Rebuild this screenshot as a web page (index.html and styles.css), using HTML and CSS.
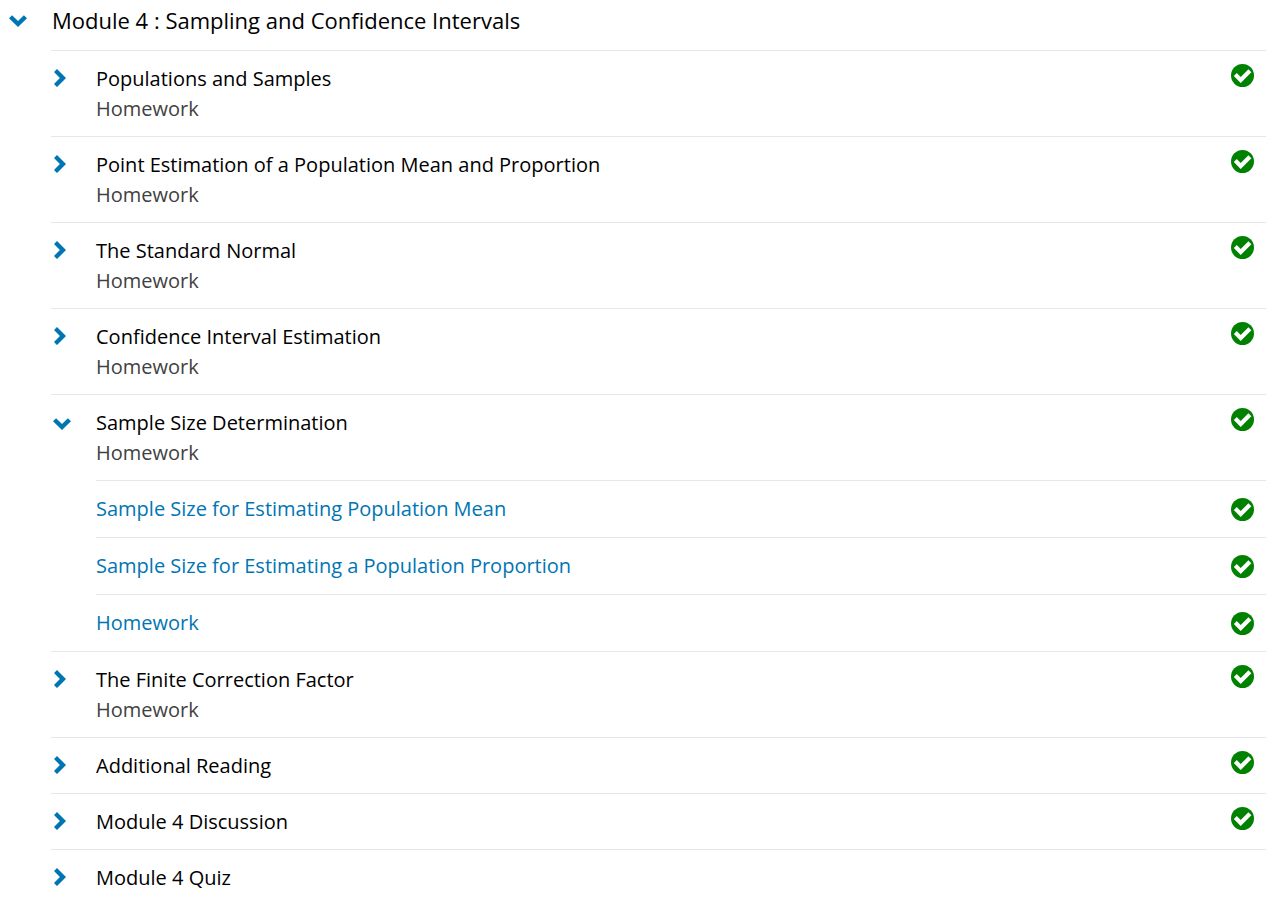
FILE: index.html
```html
<!DOCTYPE html>
<html lang="en">
<head>
<meta charset="utf-8">
<title>Module 4</title>
<link rel="stylesheet" href="styles.css">
</head>
<body>
<svg class="sprite" aria-hidden="true">
<symbol id="chevron" viewBox="0 0 12 18"><path d="M0 3.1 3 0 12 9 3 18 0 14.9 5.9 9z"/></symbol>
<symbol id="chevron-down" viewBox="0 0 18 12"><path d="M0 3.2 3.1 0.2 9 6 14.9 0.2 18 3.2 9 12z"/></symbol>
<symbol id="check" viewBox="0 0 23 23"><circle cx="11.5" cy="11.5" r="11.5"/><path d="M4.3 10.6 9.7 16 18.9 6.8" fill="none" stroke="#fff" stroke-width="4.2"/></symbol>
</svg>
<main class="outline">
<button class="module"><svg class="down"><use href="#chevron-down"/></svg><span class="module-title">Module 4 : Sampling and Confidence Intervals</span></button>
<ul class="sections">
<li><button class="row"><svg class="right"><use href="#chevron"/></svg><span class="text">Populations and Samples<span class="kind">Homework</span></span><svg class="check"><use href="#check"/></svg></button></li>
<li><button class="row"><svg class="right"><use href="#chevron"/></svg><span class="text">Point Estimation of a Population Mean and Proportion<span class="kind">Homework</span></span><svg class="check"><use href="#check"/></svg></button></li>
<li><button class="row"><svg class="right"><use href="#chevron"/></svg><span class="text">The Standard Normal<span class="kind">Homework</span></span><svg class="check"><use href="#check"/></svg></button></li>
<li><button class="row"><svg class="right"><use href="#chevron"/></svg><span class="text">Confidence Interval Estimation<span class="kind">Homework</span></span><svg class="check"><use href="#check"/></svg></button></li>
<li><button class="row"><svg class="down"><use href="#chevron-down"/></svg><span class="text">Sample Size Determination<span class="kind">Homework</span></span><svg class="check"><use href="#check"/></svg></button>
<ul class="units">
<li><a class="unit" href="#">Sample Size for Estimating Population Mean<svg class="check"><use href="#check"/></svg></a></li>
<li><a class="unit" href="#">Sample Size for Estimating a Population Proportion<svg class="check"><use href="#check"/></svg></a></li>
<li><a class="unit" href="#">Homework<svg class="check"><use href="#check"/></svg></a></li>
</ul></li>
<li><button class="row"><svg class="right"><use href="#chevron"/></svg><span class="text">The Finite Correction Factor<span class="kind">Homework</span></span><svg class="check"><use href="#check"/></svg></button></li>
<li><button class="row"><svg class="right"><use href="#chevron"/></svg><span class="text">Additional Reading</span><svg class="check"><use href="#check"/></svg></button></li>
<li><button class="row"><svg class="right"><use href="#chevron"/></svg><span class="text">Module 4 Discussion</span><svg class="check"><use href="#check"/></svg></button></li>
<li><button class="row"><svg class="right"><use href="#chevron"/></svg><span class="text">Module 4 Quiz</span></button></li>
</ul>
</main>
</body>
</html>
```
FILE: styles.css
```css
* { box-sizing: border-box; }
body { margin: 0; background: #fff; color: #000; font: 20px/30px "Open Sans", sans-serif; }
ul { margin: 0; padding: 0; list-style: none; }
button { width: 100%; border: 0; background: none; color: inherit; font: inherit; text-align: left; cursor: pointer; }
.sprite { position: absolute; width: 0; height: 0; }
.outline { padding-right: 16px; }
.module { display: flex; padding: 5px 0 15px 9px; }
.module-title { font-size: 22px; }
.sections { margin-left: 51px; }
.sections li { border-top: 1px solid #e7e7e7; }
.row { display: flex; padding: 13px 12px 12px 2px; }
.right, .down { flex: none; fill: #0075b4; }
.right { width: 12px; height: 18px; margin: 5px 30px 0 1px; }
.down { width: 18px; height: 12px; margin: 10px 25px 0 0; }
.text { flex: 1; }
.kind { display: block; color: #414141; }
.check { flex: none; width: 23px; height: 23px; fill: #008100; }
.units { margin-left: 45px; }
.unit { display: flex; align-items: center; justify-content: space-between; padding: 13px 12px 13px 0; color: #0075b4; text-decoration: none; }
```
